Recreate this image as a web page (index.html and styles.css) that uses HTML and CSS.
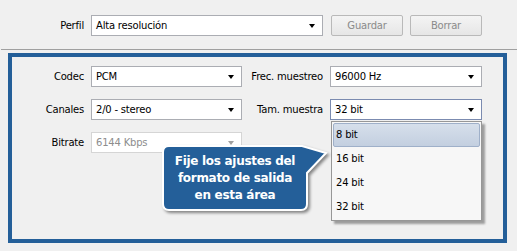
FILE: index.html
```html
<!DOCTYPE html>
<html lang="es">
<head>
    <meta charset="UTF-8">
    <title>Formato de salida</title>
    <link rel="stylesheet" href="styles.css">
</head>
<body>
    <div class="toolbar">
        <span class="lbl">Perfil</span>
        <div class="combo wide"><span>Alta resolución</span><i class="arrow"></i></div>
        <button class="btn" disabled>Guardar</button>
        <button class="btn" disabled>Borrar</button>
    </div>

    <div class="frame">
        <div class="grid">
            <span class="lbl">Codec</span>
            <div class="combo"><span>PCM</span><i class="arrow"></i></div>
            <span class="lbl">Frec. muestreo</span>
            <div class="combo"><span>96000 Hz</span><i class="arrow"></i></div>

            <span class="lbl">Canales</span>
            <div class="combo"><span>2/0 - stereo</span><i class="arrow"></i></div>
            <span class="lbl">Tam. muestra</span>
            <div class="combo focus">
                <span>32 bit</span><i class="arrow"></i>
                <ul class="list">
                    <li class="sel">8 bit</li>
                    <li>16 bit</li>
                    <li>24 bit</li>
                    <li>32 bit</li>
                </ul>
            </div>

            <span class="lbl">Bitrate</span>
            <div class="combo off"><span>6144 Kbps</span><i class="arrow"></i></div>
        </div>

        <div class="callout">
            <svg class="bubble" width="172" height="74" viewBox="0 0 172 74">
                <path d="M9 3 H142 L166 10 L147 30 V61 Q147 67 141 67 H9 Q3 67 3 61 V9 Q3 3 9 3 Z" fill="#245f99" stroke="#fff" stroke-width="2"/>
            </svg>
            <p>Fije los ajustes del<br>formato de salida<br>en esta área</p>
        </div>
    </div>
</body>
</html>
```

FILE: styles.css
```css
*{margin:0;padding:0;box-sizing:border-box;}
body{
    background:#f0f0f0;
    font-family:"DejaVu Sans",Verdana,sans-serif;
    font-size:10px;
    letter-spacing:-0.2px;
    color:#000;
    width:517px;
    height:251px;
    overflow:hidden;
}

/* top bar */
.toolbar{
    display:flex;
    align-items:flex-start;
    height:50px;
    padding:15px 0 0 12px;
    margin-left:1px;
    border-bottom:1px solid #a0a0a0;
}
.toolbar .lbl{width:78px;line-height:21px;}
.lbl{text-align:right;padding-right:7px;white-space:nowrap;}
.combo{
    position:relative;
    height:21px;
    background:#fff;
    border:1px solid #abadb3;
    display:flex;
    align-items:center;
    padding-left:4px;
}
.combo.wide{width:232px;}
.combo.focus{border-color:#7b8bb0;}
.combo.off{border-color:#d5d5d5;color:#8d8d8d;}
.arrow{
    position:absolute;
    right:7px;
    top:8px;
    border-left:3.5px solid transparent;
    border-right:3.5px solid transparent;
    border-top:4px solid #000;
}
.combo.off .arrow{border-top-color:#a0a0a0;}

.btn{
    width:72px;
    height:21px;
    margin-left:8px;
    font:inherit;
    letter-spacing:inherit;
    color:#8a8a8a;
    border:1px solid #b9b9b9;
    border-radius:2px;
    background:linear-gradient(#f4f4f4,#e6e6e6);
}
.btn + .btn{margin-left:7px;}

/* settings frame */
.frame{
    position:relative;
    margin:3px 10px 0 8px;
    height:190px;
    border:4px solid #245f99;
    padding:9px 0 0 0;
}
.grid{
    display:grid;
    grid-template-columns:79px 151px 88px 152px;
    grid-auto-rows:21px;
    row-gap:12px;
    align-items:center;
}

.list{
    position:absolute;
    left:0;
    right:-1px;
    top:21px;
    list-style:none;
    background:#f7f7f7;
    border:1px solid #979797;
    padding:1px;
    box-shadow:3px 3px 2px rgba(0,0,0,.35);
    z-index:2;
}
.list li{
    height:24px;
    line-height:22px;
    padding-left:2px;
    border:1px solid transparent;
}
.list li.sel{
    background:linear-gradient(#d6dfeb,#c3cfe0);
    border-color:#9fb0c9;
    border-radius:2px;
}

/* tooltip bubble */
.callout{
    position:absolute;
    left:148px;
    top:86px;
    width:172px;
    height:74px;
    z-index:3;
}
.bubble{
    position:absolute;
    left:0;
    top:0;
    filter:drop-shadow(2px 2px 1.5px rgba(0,0,0,.45));
}
.callout p{
    position:relative;
    width:150px;
    padding-top:10px;
    text-align:center;
    color:#fff;
    font-weight:bold;
    font-size:12px;
    line-height:17px;
    letter-spacing:-0.3px;
}
```
